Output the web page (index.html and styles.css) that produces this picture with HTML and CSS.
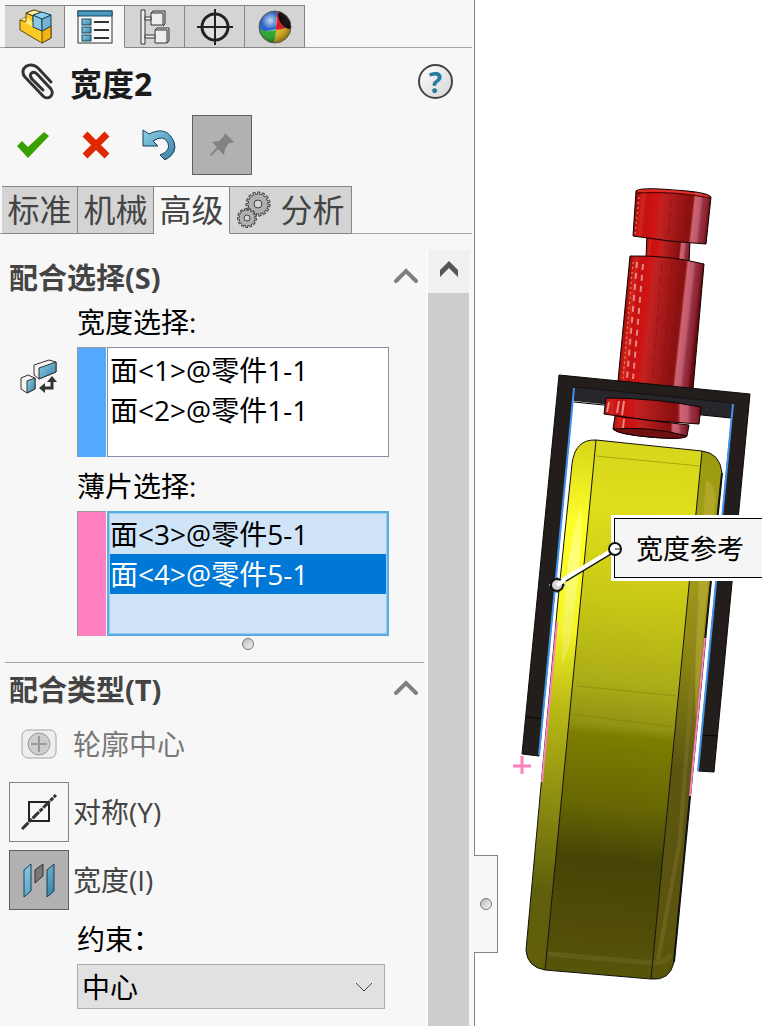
FILE: index.html
```html
<!DOCTYPE html>
<html lang="zh-CN">
<head>
  <meta charset="UTF-8">
  <meta name="viewport" content="width=device-width, initial-scale=1.0">
  <title>宽度2</title>
  <link rel="stylesheet" href="styles.css">
</head>
<body>
<div class="app">

  <!-- Property panel -->
  <aside class="panel">
    <nav class="manager-tabs">
      <button class="manager-tab" aria-label="FeatureManager">
        <svg width="34" height="36" viewBox="0 0 34 36">
          <g stroke="#5d4a12" stroke-linejoin="round">
            <path d="M2 11l6-3V4l8-3 8 3 9 13v12l-9 5L2 21z" fill="#fbcb24"/>
            <path d="M8 4l8-3 7 2-8 4z" fill="#fff0a0"/>
            <path d="M2 11l6-3 7 5v5z" fill="#ffe77a" stroke="none"/>
            <path d="M24 22l9-5v12l-9 5z" fill="#f0b414"/>
            <path d="M8 4l7 3v6M8 8v4M2 11l6 2" fill="none"/>
          </g>
          <g stroke="#17425c" stroke-linejoin="round">
            <path d="M15 6l9 4v12l-9-4z" fill="#8cc6e2"/>
            <path d="M24 10l9-4v11l-9 5z" fill="#74b2d4"/>
            <path d="M15 6l9-3 9 3-9 4z" fill="#8fd0ec"/>
          </g>
        </svg>
      </button>
      <button class="manager-tab active" aria-label="PropertyManager">
        <svg width="36" height="34" viewBox="0 0 36 34">
          <defs><linearGradient id="blue" x1="0" y1="0" x2="1" y2="1"><stop offset="0" stop-color="#8dd0ea"/><stop offset="1" stop-color="#397fa3"/></linearGradient></defs>
          <rect x="1" y="1" width="34" height="32" fill="#fafafa" stroke="#333"/>
          <rect x="1" y="1" width="34" height="5" fill="#4a9abd" stroke="#16465f"/>
          <g fill="url(#blue)" stroke="#16465f">
            <rect x="5" y="9" width="9" height="6"/><rect x="5" y="17" width="9" height="6"/><rect x="5" y="25" width="9" height="6"/>
          </g>
          <path d="M17 12h15M17 20h15M17 28h15" stroke="#333" stroke-width="2"/>
        </svg>
      </button>
      <button class="manager-tab" aria-label="ConfigurationManager">
        <svg width="30" height="36" viewBox="0 0 30 36">
          <g fill="#eee" stroke="#333">
            <path d="M1 1h4v34H1zM11 4h12v12H11zM15 21h12v13H15z"/>
            <path d="M11 4l2-2h12v13l-2 2M15 21l2-2h12v13l-2 2" fill="none"/>
            <path d="M5 8h6v3H5zM5 26h10v3H5z"/>
          </g>
        </svg>
      </button>
      <button class="manager-tab" aria-label="DimXpertManager">
        <svg width="36" height="36" viewBox="0 0 36 36">
          <circle cx="18" cy="18" r="13" fill="#dedede" stroke="#222" stroke-width="3"/>
          <path d="M18 0v36M0 18h36" stroke="#222" stroke-width="2"/>
        </svg>
      </button>
      <button class="manager-tab" aria-label="DisplayManager">
        <svg width="36" height="36" viewBox="0 0 36 36">
          <defs>
            <clipPath id="ball"><circle cx="18" cy="18" r="16"/></clipPath>
            <radialGradient id="shine" cx=".35" cy=".3" r=".7"><stop offset="0" stop-color="#fff" stop-opacity=".75"/><stop offset=".4" stop-color="#fff" stop-opacity="0"/><stop offset="1" stop-color="#000" stop-opacity=".35"/></radialGradient>
          </defs>
          <g clip-path="url(#ball)">
            <path d="M0 0h22q-4 9-3 20Q9 24 0 20z" fill="#2563c4"/>
            <path d="M0 20q9 4 19 1 0 9-3 15H0z" fill="#20a822"/>
            <path d="M19 21q9-1 17-6v21H16q3-6 3-15z" fill="#e6b619"/>
            <path d="M21 0h15v16q-8 4-17 5 0-12 2-21z" fill="#cf1520"/>
            <ellipse cx="28" cy="11" rx="5" ry="10" transform="rotate(-32 28 11)" fill="#060000"/>
          </g>
          <circle cx="18" cy="18" r="16" fill="url(#shine)" stroke="#555"/>
        </svg>
      </button>
    </nav>

    <header class="title-row">
      <svg width="34" height="38" viewBox="0 0 34 38" fill="none" stroke="#333" stroke-width="3" stroke-linecap="round">
        <path d="M31 19 18 5C10-3-2 6 5 14l18 19c5 5 12-1 8-7L17 11c-4-4-9 0-5 5l11 11"/>
      </svg>
      <h1>宽度2</h1>
      <button class="help" aria-label="帮助">?</button>
    </header>

    <div class="actions">
      <button class="action" aria-label="确定">
        <svg width="36" height="30" viewBox="0 0 36 30"><path d="M2 16l5-5 6 6L29 2l5 4-21 22z" fill="#38a000"/></svg>
      </button>
      <button class="action" aria-label="取消">
        <svg width="28" height="28" viewBox="0 0 28 28"><path d="M3 3l22 22M25 3L3 25" stroke="#e02800" stroke-width="7"/></svg>
      </button>
      <button class="action" aria-label="撤消">
        <svg width="34" height="32" viewBox="0 0 34 32"><path d="M1 2v15h15l-5-5q11-7 15 2 3 8-8 12l5 5q13-7 9-18Q25-4 7 5L1 1z" fill="url(#blue)" stroke="#143f5a"/></svg>
      </button>
      <button class="action pressed" aria-label="保持显示">
        <svg width="24" height="24" viewBox="0 0 24 24"><path d="M15 0l9 9-3 1h-2l-4 6-1 6-6-6-7 7-1-1 7-8-5-5 7-1 5-5z" fill="#828282"/></svg>
      </button>
    </div>

    <nav class="mate-tabs">
      <button class="mate-tab">标准</button>
      <button class="mate-tab">机械</button>
      <button class="mate-tab active">高级</button>
      <button class="mate-tab wide">
        <svg width="36" height="38" viewBox="0 0 36 38" fill="none">
          <circle cx="22" cy="13" r="10.500" stroke="#444" stroke-width="4" stroke-dasharray="2.900 1.500"/>
          <circle cx="22" cy="13" r="10" fill="#b0b0b0" stroke="#444"/>
          <circle cx="22" cy="13" r="10" stroke="#b0b0b0" stroke-width="3" stroke-dasharray="1.300 2.890" stroke-dashoffset="-.7"/>
          <circle cx="22" cy="13" r="4" fill="#d4d4d4" stroke="#444"/>
          <circle cx="11" cy="27" r="8.500" stroke="#444" stroke-width="3" stroke-dasharray="2.600 1.510"/>
          <circle cx="11" cy="27" r="8" fill="#b0b0b0" stroke="#444"/>
          <circle cx="11" cy="27" r="8" stroke="#b0b0b0" stroke-width="2" stroke-dasharray="1.200 2.660" stroke-dashoffset="-.7"/>
          <circle cx="11" cy="27" r="3" fill="#d4d4d4" stroke="#444"/>
        </svg>
        分析
      </button>
    </nav>

    <div class="scroll-area">
      <div class="content">

        <section class="section">
          <div class="section-head">
            <h2>配合选择(S)</h2>
            <button class="collapse" aria-label="折叠"><svg width="26" height="16" viewBox="0 0 26 16"><path d="M3 13L13 3l10 10" fill="none" stroke="#808080" stroke-width="4" stroke-linecap="round"/></svg></button>
          </div>
          <div class="field">
            <span class="label" id="width-label">宽度选择:</span>
            <div class="picker">
              <svg class="swap" width="38" height="36" viewBox="0 0 38 36">
                <g stroke="#333" stroke-linejoin="round">
                  <path d="M14 6l15-5 7 2v10l-17 7-5-4z" fill="#f4f4f4"/>
                  <path d="M19 9l17-6v10l-17 7z" fill="url(#blue)"/>
                  <path d="M1 19l7-3 7 3v11l-8 4-6-4z" fill="#f4f4f4"/>
                  <path d="M7 22l8-3v11l-8 4z" fill="url(#blue)"/>
                </g>
                <path d="M24 29h8v-7" fill="none" stroke="#333" stroke-width="3"/>
                <path d="M27 23l5-6 5 6zM25 24l-6 5 6 5z" fill="#333"/>
              </svg>
              <div class="swatch blue"></div>
              <ul class="list" role="listbox" aria-labelledby="width-label">
                <li role="option">面&lt;1&gt;@零件1-1</li>
                <li role="option">面&lt;2&gt;@零件1-1</li>
              </ul>
            </div>
          </div>
          <div class="field">
            <span class="label" id="tab-label">薄片选择:</span>
            <div class="picker">
              <div class="swatch pink"></div>
              <ul class="list focused" role="listbox" aria-labelledby="tab-label">
                <li role="option">面&lt;3&gt;@零件5-1</li>
                <li role="option" aria-selected="true" class="selected">面&lt;4&gt;@零件5-1</li>
              </ul>
            </div>
          </div>
          <div class="resize"><span class="knob"></span></div>
        </section>

        <section class="section">
          <div class="section-head">
            <h2>配合类型(T)</h2>
            <button class="collapse" aria-label="折叠"><svg width="26" height="16" viewBox="0 0 26 16"><path d="M3 13L13 3l10 10" fill="none" stroke="#808080" stroke-width="4" stroke-linecap="round"/></svg></button>
          </div>
          <div class="mates">
            <div class="mate disabled">
              <button class="mate-button" id="profile" disabled>
                <svg width="36" height="30" viewBox="0 0 36 30">
                  <rect x="1" y="1" width="34" height="28" rx="6" fill="#eee" stroke="#a5a5a5"/>
                  <circle cx="18" cy="15" r="11" fill="#ccc" stroke="#999"/>
                  <path d="M18 7v16M10 15h16" stroke="#999" stroke-width="2"/>
                </svg>
              </button>
              <label for="profile">轮廓中心</label>
            </div>
            <div class="mate">
              <button class="mate-button boxed" id="symmetric">
                <svg width="36" height="36" viewBox="0 0 36 36">
                  <path d="M8 8h20v19H8z" fill="none" stroke="#222" stroke-width="2"/>
                  <path d="M1 35L35 1" stroke="#2b3338" stroke-width="3" stroke-dasharray="9 1 4 1"/>
                </svg>
              </button>
              <label for="symmetric">对称(Y)</label>
            </div>
            <div class="mate">
              <button class="mate-button boxed pressed" id="width">
                <svg width="32" height="36" viewBox="0 0 32 36" stroke-linejoin="round">
                  <path d="M1 8l7-6v27l-7 6zM24 8l7-6v27l-7 6z" fill="url(#blue)" stroke="#143f5a"/>
                  <path d="M12 8l8-6v12l-8 7z" fill="#777" stroke="#333"/>
                </svg>
              </button>
              <label for="width">宽度(I)</label>
            </div>
          </div>
          <div class="field">
            <label class="label" for="constraint">约束：</label>
            <div class="dropdown">
              <select id="constraint"><option>中心</option></select>
              <svg width="18" height="10" viewBox="0 0 18 10"><path d="M1 1l8 8 8-8" fill="none" stroke="#444"/></svg>
            </div>
          </div>
        </section>
      </div>

      <div class="scrollbar">
        <button class="scroll-up" aria-label="向上滚动"><svg width="18" height="16" viewBox="0 0 18 16"><path d="M0 9l9-9 9 9v7L9 7l-9 9z" fill="#555"/></svg></button>
      </div>
    </div>

    <div class="splitter"><span class="knob"></span></div>
  </aside>

  <!-- Graphics area -->
  <main class="viewport">
    <svg class="model" viewBox="475 0 287 1026">
      <defs>
        <linearGradient id="red">
          <stop offset="0" stop-color="#9c1010"/><stop offset=".08" stop-color="#d8231c"/><stop offset=".14" stop-color="#c41212"/>
          <stop offset=".28" stop-color="#d01414"/><stop offset=".34" stop-color="#c22222"/><stop offset=".55" stop-color="#a31818"/>
          <stop offset=".72" stop-color="#8a1010"/><stop offset=".76" stop-color="#8a1414"/><stop offset=".79" stop-color="#cf6472"/>
          <stop offset=".86" stop-color="#c05a6c"/><stop offset=".9" stop-color="#963246"/><stop offset=".96" stop-color="#8c2030"/><stop offset="1" stop-color="#650b0b"/>
        </linearGradient>
        <!-- follows the tilt of the pin -->
        <linearGradient id="red-shaft" href="#red" gradientUnits="userSpaceOnUse" x1="624" y1="318" x2="697" y2="326"/>
        <linearGradient id="red-neck" href="#red" gradientUnits="userSpaceOnUse" x1="646" y1="248" x2="690" y2="253"/>
        <linearGradient id="tread" gradientUnits="userSpaceOnUse" x1="648" y1="445" x2="598" y2="975">
          <stop offset="0" stop-color="#d6d61b"/><stop offset=".12" stop-color="#dfdf1c"/><stop offset=".3" stop-color="#c7c716"/>
          <stop offset=".45" stop-color="#acac18"/><stop offset=".53" stop-color="#929214"/><stop offset=".55" stop-color="#7d7d00"/>
          <stop offset=".68" stop-color="#676704"/><stop offset=".78" stop-color="#464506"/><stop offset=".9" stop-color="#504b08"/><stop offset="1" stop-color="#57550a"/>
        </linearGradient>
        <linearGradient id="left-side" gradientUnits="userSpaceOnUse" x1="584" y1="445" x2="536" y2="970">
          <stop offset="0" stop-color="#d8d818"/><stop offset=".15" stop-color="#ffff2a"/><stop offset=".35" stop-color="#f5f522"/>
          <stop offset=".5" stop-color="#b9b916"/><stop offset=".68" stop-color="#8c8c10"/><stop offset=".85" stop-color="#5f5f0c"/><stop offset="1" stop-color="#625f0a"/>
        </linearGradient>
        <linearGradient id="right-side" gradientUnits="userSpaceOnUse" x1="712" y1="450" x2="662" y2="980">
          <stop offset="0" stop-color="#9a9a10"/><stop offset=".2" stop-color="#a8a01c"/><stop offset=".4" stop-color="#8a8412"/>
          <stop offset=".6" stop-color="#5c5710"/><stop offset=".8" stop-color="#5b5410"/><stop offset="1" stop-color="#5a550a"/>
        </linearGradient>
        <linearGradient id="glare" gradientUnits="userSpaceOnUse" x1="600" y1="460" x2="545" y2="800">
          <stop offset="0" stop-color="#ffff70" stop-opacity="0"/><stop offset=".3" stop-color="#ffff80"/><stop offset="1" stop-color="#d0d020" stop-opacity="0"/>
        </linearGradient>
      </defs>

      <!-- Pin, upper part -->
      <g stroke="#140000">
        <path d="M647 234l43 6-1 23-43-5z" fill="url(#red-neck)"/>
        <path d="M636 191q4-4 38-1 34 2 37 7l-5 47q-36-2-73-8z" fill="url(#red-shaft)"/>
        <path d="M630 256q38-1 74 8l-11 125-75-8z" fill="url(#red-shaft)"/>
      </g>
      <path d="M638 191q37-2 71 6" fill="none" stroke="#e03028" stroke-width="2"/>
      <path d="M637 193q37-2 73 5" fill="none" stroke="#400"/>
      <path d="M637 262l-10 117M643 264l-10 115" stroke="#f2a49e" stroke-width="2" stroke-dasharray="6 5" opacity=".8"/>
      <path d="M633 262l-10 117M639 197l-4 38" stroke="#ee9a54" stroke-dasharray="2 3"/>
      <path d="M662 264l-10 119M672 264l-10 119M671 200l-3 38" stroke="#8a1010" stroke-dasharray="8 5" opacity=".7"/>

      <!-- Fork -->
      <path d="M574 387l159 16-2 15-157-17z" fill="#27272b"/>
      <path d="M559 375l191 19-36 378-16-1 35-368-159-16-35 369-17-2z" fill="#231e1c" stroke="#0c0b0a"/>
      <path d="M574 402l157 16M527 717l15 2M702 735l15 1" stroke="#000"/>
      <path d="M574 388L539 755M733 404l-35 367" stroke="#3f93e8" stroke-width="2"/>

      <!-- Pin, lower part -->
      <g fill="url(#red)" stroke="#140000">
        <path d="M606 398q48 0 95 9l-2 17q-48-2-95-10z"/>
        <path d="M615 416q37 5 74 9l-2 11q-4 4-38 1-32-3-36-8z"/>
        <path d="M613 429q37-3 74 7-4 4-38 1-32-3-36-8z" fill="#701010"/>
      </g>
      <path d="M619 401l-2 12M624 401l-2 14M609 402l-2 10M624 419l-1 9" stroke="#f5aaa4" stroke-width="2" opacity=".8"/>

      <!-- Wheel -->
      <path d="M596 440q-21-1-24 24l-14 136-32 350q1 17 19 20z" fill="url(#left-side)"/>
      <path d="M702 451q18 2 20 22l-13 127-35 362q-4 19-23 17z" fill="url(#right-side)"/>
      <path d="M596 440l106 11-51 528-106-9z" fill="url(#tread)"/>
      <path d="M581 505q-19 60-19 160l8-20q13-95 11-140z" fill="url(#glare)"/>
      <path d="M706 480q9 4 9 20l-19 220q-4-60 10-240z" fill="#c2b33c" opacity=".5"/>
      <path d="M698 600l-18 240-22 120" fill="none" stroke="#918540" stroke-width="4" opacity=".3"/>
      <path d="M596 456l104 10" stroke="#aaa80b"/>
      <path d="M578 686l98 10M572 714l100 13M569 744l100 11" stroke="#737400" opacity=".4"/>
      <path d="M548 954l105 9q14 0 18-9" fill="none" stroke="#737030" stroke-width="5" opacity=".4"/>
      <path d="M596 440q-21-1-24 24l-14 136-32 350q1 17 19 20l106 9q19 2 23-17l35-362 13-127q-2-20-20-22z" fill="none" stroke="#111"/>
      <path d="M722 473l-13 127-35 362" fill="none" stroke="#111" stroke-width="2"/>
      <path d="M596 440l-51 530M702 451l-51 528" stroke="#111"/>
      <path d="M557 622l-15 160M705 638l-15 158" stroke="#ff7fbf" stroke-width="2"/>

      <path d="M522 756v18M513 766h18" stroke="#ff7fbf" stroke-width="3"/>
    </svg>

    <div class="callout">宽度参考</div>
    <svg class="leader" width="74" height="54" viewBox="0 0 74 54">
      <path d="M8 44L66 9" stroke="#111" stroke-width="4"/>
      <path d="M7 43L65 8" stroke="#fff" stroke-width="4"/>
      <path d="M0 44h16M8 36v16" stroke="#3f93e8" stroke-width="2"/>
      <circle cx="8" cy="44" r="6" fill="#d4d4d4" stroke="#111" stroke-width="2"/>
      <path d="M8 44l8-5" stroke="#fff" stroke-width="4"/>
      <circle cx="66" cy="8" r="6" fill="#fff" stroke="#111" stroke-width="2"/>
      <path d="M66 8h6" stroke="#111"/>
    </svg>
  </main>

</div>
</body>
</html>
```

FILE: styles.css
```css
* {
  box-sizing: border-box;
}

body {
  margin: 0;
  background: #fff;
  color: #000;
  font-family: "Open Sans", "Noto Sans CJK SC", sans-serif;
  font-size: 28px;
  line-height: 40px;
}

button {
  display: flex;
  align-items: center;
  justify-content: center;
  padding: 0;
  border: 0;
  background: none;
  color: inherit;
  font: inherit;
}

svg {
  display: block;
  flex: none;
}

h1, h2 {
  margin: 0;
  font-weight: bold;
}

.app {
  display: flex;
  min-height: 100vh;
}

/* Panel */
.panel {
  position: relative;
  display: flex;
  flex-direction: column;
  flex: 0 0 475px;
  padding-top: 5px;
  background: #f7f7f7;
  border-right: 1px solid #858585;
}

.manager-tabs {
  display: flex;
  height: 43px;
  margin-right: 2px;
  padding-left: 5px;
  border-bottom: 1px solid #a5a5a5;
}

.manager-tab {
  width: 60px;
  height: 43px;
  border: 1px solid #858585;
  border-left: 0;
  background: #d4d4d4;
}

.manager-tab.active,
.mate-tab.active {
  background: #f7f7f7;
  border-bottom-color: #f7f7f7;
}

.title-row {
  display: flex;
  align-items: center;
  height: 67px;
  padding: 0 21px 0 20px;
}

.title-row h1 {
  margin-left: 16px;
  padding-top: 4px;
  color: #1c1c1c;
  font-size: 32px;
}

.help {
  width: 35px;
  height: 35px;
  margin-left: auto;
  border: 2px solid #444;
  border-radius: 50%;
  background: linear-gradient(135deg, #fff, #d4d4d4);
  color: #2878a0;
  font-weight: bold;
}

.actions {
  display: flex;
  gap: 3px;
  padding-left: 3px;
}

.action {
  width: 60px;
  height: 60px;
}

.pressed {
  border: 1px solid #606060;
  background: #b1b1b1;
}

.mate-tabs {
  display: flex;
  height: 48px;
  margin: 11px 2px 0 0;
  padding-left: 2px;
  border-bottom: 1px solid #a5a5a5;
}

.mate-tab {
  width: 76px;
  height: 48px;
  border: 1px solid #858585;
  border-left: 0;
  background: #d4d4d4;
  color: #444;
  font-size: 32px;
}

.mate-tab.wide {
  gap: 8px;
  width: 122px;
}

/* Scrolling content */
.scroll-area {
  display: flex;
  flex: 1;
  margin-top: 16px;
  padding-right: 5px;
}

.content {
  flex: 1;
  border-right: 1px solid #fff;
}

.section {
  padding: 8px 0 0 9px;
}

.section + .section {
  position: relative;
}

.section + .section::before {
  content: "";
  position: absolute;
  top: 0;
  left: 5px;
  right: 3px;
  border-top: 1px solid #a5a5a5;
}

.section-head {
  display: flex;
  align-items: center;
  justify-content: space-between;
  margin-bottom: 4px;
  padding-right: 8px;
}

.section-head h2 {
  color: #444;
  font-size: 29px;
}

.collapse,
.scroll-up {
  padding-bottom: 5px;
}

.field {
  margin: 0 38px 9px 68px;
}

.label {
  display: block;
  margin-bottom: 5px;
}

.picker {
  position: relative;
  display: flex;
  gap: 1px;
}

.swap {
  position: absolute;
  top: 12px;
  left: -57px;
}

.swatch {
  width: 29px;
  border: 1px solid #999;
  border-width: 1px 0 0 1px;
}

.swatch.blue {
  background: #55a8ff;
}

.swatch.pink {
  background: #ff80c0;
}

.list {
  flex: 1;
  min-height: 110px;
  margin: 0;
  padding: 2px;
  border: 1px solid #868ea2;
  background: #fff;
  list-style: none;
}

.list.focused {
  min-height: 125px;
  padding: 1px;
  border: 2px solid #55ade0;
  background: #cfe4f7;
  box-shadow: inset 0 0 0 1px #9ccbef;
}

.list .selected {
  background: #0078d7;
  color: #fff;
}

.resize {
  display: flex;
  justify-content: center;
  height: 24px;
  margin: -7px 38px 0 98px;
}

.knob {
  width: 12px;
  height: 12px;
  border: 1px solid #777;
  border-radius: 50%;
  background: linear-gradient(135deg, #bbb, #f4f4f4);
}

/* Mate types */
.mates {
  display: flex;
  flex-direction: column;
  gap: 8px;
  margin-bottom: 9px;
}

.mate {
  display: flex;
  align-items: center;
  gap: 4px;
  color: #444;
}

.mate.disabled {
  color: #777;
}

.mate-button {
  width: 60px;
  height: 60px;
}

.boxed {
  border: 1px solid #858585;
}

.boxed.pressed {
  border-color: #606060;
}

.dropdown {
  position: relative;
  margin-right: 4px;
}

.dropdown select {
  width: 100%;
  height: 45px;
  padding: 0 4px;
  border: 1px solid #adadad;
  border-radius: 0;
  appearance: none;
  background: #e1e1e1;
  color: #000;
  font: inherit;
}

.dropdown svg {
  position: absolute;
  top: 18px;
  right: 12px;
  pointer-events: none;
}

.scrollbar {
  width: 41px;
  background: #cdcdcd;
}

.scroll-up {
  width: 100%;
  height: 43px;
  background: #f0f0f0;
}

.splitter {
  position: absolute;
  top: 855px;
  right: -24px;
  z-index: 1;
  display: flex;
  align-items: center;
  justify-content: center;
  width: 24px;
  height: 98px;
  border: 1px solid #858585;
  border-left: 0;
  background: #f7f7f7;
}

/* Graphics area */
.viewport {
  position: relative;
  flex: 1;
  min-width: 0;
  overflow: hidden;
}

.model {
  width: 100%;
  height: auto;
}

.callout {
  position: absolute;
  top: 518px;
  left: 139px;
  right: -4px;
  height: 60px;
  padding-left: 21px;
  border: 1px solid #000;
  outline: 3px solid #fff;
  background: #f5f5f5;
  font-size: 27px;
  line-height: 60px;
  white-space: nowrap;
}

.leader {
  position: absolute;
  top: 541px;
  left: 74px;
}
```
